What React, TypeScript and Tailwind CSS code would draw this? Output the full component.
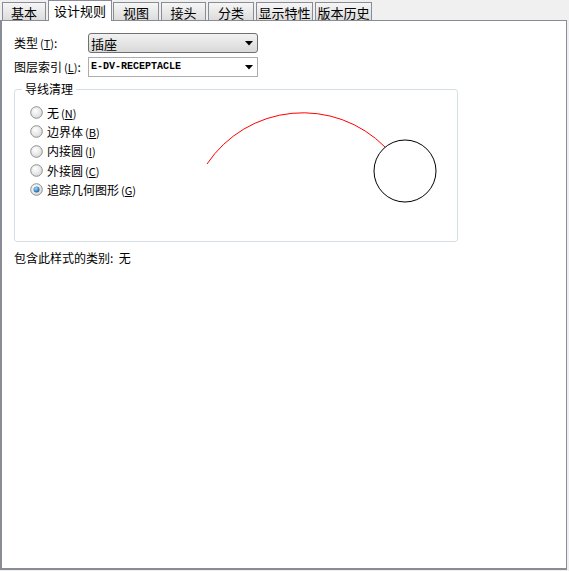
import React from 'react';

const cjk = { fontFamily: '"Noto Sans CJK SC", "Liberation Sans", sans-serif' };

const tabs = [
  { t: '基本', w: 44 },
  { t: '设计规则', w: 64 },
  { t: '视图', w: 46 },
  { t: '接头', w: 45 },
  { t: '分类', w: 46 },
  { t: '显示特性', w: 57 },
  { t: '版本历史', w: 57 },
];

function Key({ k }: { k: string }) {
  return (
    <span className="ml-[2px] text-[11px]">
      (<span className="underline">{k}</span>)
    </span>
  );
}

function Arrow() {
  return (
    <svg width="8" height="5" viewBox="0 0 8 5" className="mr-1">
      <path d="M0 0 L8 0 L4 4.5 Z" fill="#000" />
    </svg>
  );
}

function Radio({ checked, label, k }: { checked?: boolean; label: string; k: string }) {
  return (
    <div className="flex h-[19.3px] items-center whitespace-nowrap">
      <svg width="13" height="13" viewBox="0 0 13 13" className="mr-[4px] shrink-0">
        <defs>
          <radialGradient id={'rg' + k} cx="40%" cy="35%" r="70%">
            <stop offset="0%" stopColor="#ffffff" />
            <stop offset="100%" stopColor="#d8d8d8" />
          </radialGradient>
          <radialGradient id={'dot' + k} cx="40%" cy="35%" r="70%">
            <stop offset="0%" stopColor="#9fd8ff" />
            <stop offset="100%" stopColor="#0d5a9e" />
          </radialGradient>
        </defs>
        <circle cx="6.5" cy="6.5" r="5.8" fill={`url(#rg${k})`} stroke="#8e8f8f" strokeWidth="1" />
        {checked && <circle cx="6.5" cy="6.5" r="3" fill={`url(#dot${k})`} />}
      </svg>
      <span>
        {label}
        <Key k={k} />
      </span>
    </div>
  );
}

export default function App() {
  return (
    <div className="h-[571px] w-[569px] bg-[#f0f0f0] text-[12px] leading-none text-black" style={cjk}>
      <div className="flex h-[20px] items-end pl-[2px]">
        {tabs.map(({ t, w }, i) =>
          i === 1 ? (
            <div
              key={t}
              className="relative z-10 -mb-px mr-[1px] flex h-[21px] items-center justify-center whitespace-nowrap border border-b-0 border-[#898c95] bg-white pb-[2px] text-[13px]"
              style={{ width: w }}
            >
              {t}
            </div>
          ) : (
            <div
              key={t}
              className="mr-[2px] flex h-[18px] items-center justify-center whitespace-nowrap border border-b-0 border-[#898c95] bg-gradient-to-b from-[#f6f6f6] to-[#dcdcdc] pt-[1px] text-[13px]"
              style={{ width: w }}
            >
              {t}
            </div>
          )
        )}
      </div>
      <div className="h-[550px] w-[567px] border border-[#898c95] border-b-2 border-l-2 bg-white px-[12px] pt-[12px]">
        <div className="flex h-[20px] items-center">
          <div className="w-[74px] whitespace-nowrap">
            类型<Key k="T" />:
          </div>
          <div className="flex h-[20px] w-[170px] items-center justify-between rounded-[3px] border border-[#707070] bg-gradient-to-b from-[#f2f2f2] to-[#d9d9d9] pl-[2px]">
            <span className="text-[13px]">插座</span>
            <Arrow />
          </div>
        </div>
        <div className="mt-[4px] flex h-[20px] items-center">
          <div className="w-[74px] whitespace-nowrap">
            图层索引<Key k="L" />:
          </div>
          <div className="flex h-[20px] w-[170px] items-center justify-between border border-[#abadb3] bg-white pl-[2px]">
            <span className="text-[10px] font-bold" style={{ fontFamily: '"Liberation Mono", monospace' }}>
              E-DV-RECEPTACLE
            </span>
            <Arrow />
          </div>
        </div>
        <div className="relative mt-[12px] h-[153px] w-[444px] rounded-[3px] border border-[#d5dfe5]">
          <div className="absolute -top-[7px] left-[7px] bg-white px-[3px] text-[12px]">导线清理</div>
          <div className="flex">
            <div className="w-[170px] shrink-0 pl-[15px] pt-[13px]">
              <Radio label="无" k="N" />
              <Radio label="边界体" k="B" />
              <Radio label="内接圆" k="I" />
              <Radio label="外接圆" k="C" />
              <Radio label="追踪几何图形" k="G" checked />
            </div>
            <svg width="260" height="130" viewBox="0 0 260 130">
              <path d="M 22 74 A 115.5 115.5 0 0 1 200 57" fill="none" stroke="#ff0000" strokeWidth="1" />
              <circle cx="220" cy="81" r="31" fill="none" stroke="#000" strokeWidth="1" />
            </svg>
          </div>
        </div>
        <div className="mt-[10px] whitespace-pre">包含此样式的类别:  无</div>
      </div>
    </div>
  );
}
